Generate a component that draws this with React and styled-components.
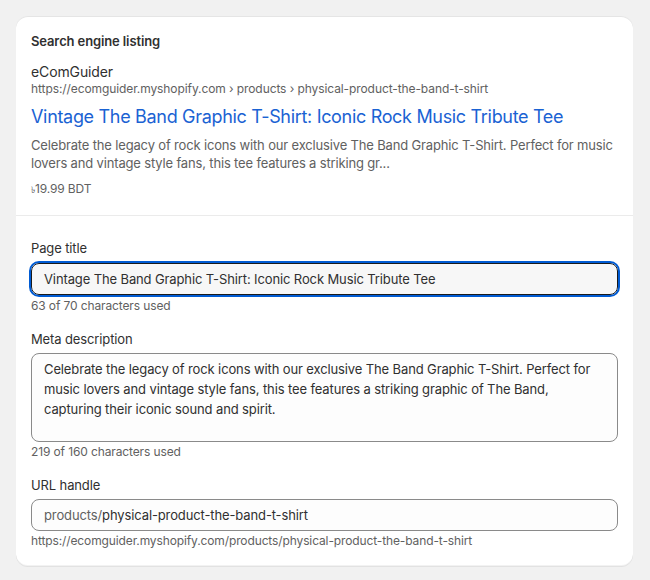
import React from 'react';
import styled, { createGlobalStyle } from 'styled-components';

const GlobalStyle = createGlobalStyle`
  body {
    margin: 0;
    background: #f1f1f1;
    font-family: Inter, "Noto Sans", sans-serif;
    color: #303030;
    letter-spacing: -0.12px;
  }
`;

const App = () => {
  return (
    <Page>
      <GlobalStyle />
      <Card>
        <Preview>
          <CardTitle>Search engine listing</CardTitle>
          <SiteName>eComGuider</SiteName>
          <Breadcrumb>https://ecomguider.myshopify.com › products › physical-product-the-band-t-shirt</Breadcrumb>
          <Headline>Vintage The Band Graphic T-Shirt: Iconic Rock Music Tribute Tee</Headline>
          <Snippet>
            Celebrate the legacy of rock icons with our exclusive The Band Graphic T-Shirt. Perfect for music
            lovers and vintage style fans, this tee features a striking gr...
          </Snippet>
          <Price><small>৳</small>19.99 BDT</Price>
        </Preview>
        <Form>
          <Field>
            <Label>Page title</Label>
            <Input $focused>Vintage The Band Graphic T-Shirt: Iconic Rock Music Tribute Tee</Input>
            <Help>63 of 70 characters used</Help>
          </Field>
          <Field>
            <Label>Meta description</Label>
            <TextArea>
              Celebrate the legacy of rock icons with our exclusive The Band Graphic T-Shirt. Perfect for
              music lovers and vintage style fans, this tee features a striking graphic of The Band,
              capturing their iconic sound and spirit.
            </TextArea>
            <Help>219 of 160 characters used</Help>
          </Field>
          <Field>
            <Label>URL handle</Label>
            <Input><Prefix>products/</Prefix>physical-product-the-band-t-shirt</Input>
            <Help>https://ecomguider.myshopify.com/products/physical-product-the-band-t-shirt</Help>
          </Field>
        </Form>
      </Card>
    </Page>
  );
};

const Page = styled.div`
  padding: 16px;
`;

const Card = styled.div`
  width: 617px;
  background: #ffffff;
  border-radius: 12px;
  box-shadow: 0 1px 0 rgba(26, 26, 26, 0.07), 0 1px 0 rgba(204, 204, 204, 0.5) inset, 0 -1px 0 rgba(0, 0, 0, 0.05) inset;
  overflow: hidden;
`;

const Preview = styled.div`
  padding: 15px 15px 17px;
  border-bottom: 1px solid #ebebeb;
`;

const CardTitle = styled.div`
  font-size: 13px;
  line-height: 20px;
  font-weight: 600;
  color: #303030;
  margin-bottom: 11px;
`;

const SiteName = styled.div`
  font-size: 14px;
  line-height: 20px;
  color: #303030;
`;

const Breadcrumb = styled.div`
  font-size: 12px;
  line-height: 16px;
  color: #616161;
  margin-top: -1px;
  letter-spacing: -0.09px;
`;

const Headline = styled.div`
  font-size: 18px;
  line-height: 24px;
  color: #1a62d3;
  margin-top: 8px;
  letter-spacing: -0.32px;
`;

const Snippet = styled.div`
  font-size: 13px;
  line-height: 18px;
  color: #616161;
  margin-top: 7px;
  letter-spacing: -0.16px;
`;

const Price = styled.div`
  font-size: 12px;
  line-height: 16px;
  color: #616161;
  margin-top: 9px;

  small {
    font-size: 9px;
  }
`;

const Form = styled.div`
  display: flex;
  flex-direction: column;
  gap: 15px;
  padding: 22px 15px 17px;
`;

const Field = styled.div`
  display: flex;
  flex-direction: column;
`;

const Label = styled.div`
  font-size: 13px;
  line-height: 20px;
  color: #303030;
  margin-bottom: 4px;
`;

const Input = styled.div`
  box-sizing: border-box;
  height: 32px;
  display: flex;
  align-items: center;
  padding: 0 12px;
  border: 1px solid ${(p) => (p.$focused ? '#1a1a1a' : '#8a8a8a')};
  border-radius: 8px;
  background: ${(p) => (p.$focused ? '#f7f7f7' : '#fdfdfd')};
  font-size: 13px;
  color: #303030;
  white-space: nowrap;
  outline: ${(p) => (p.$focused ? '2px solid #005bd3' : 'none')};
  outline-offset: 0;
  margin: ${(p) => (p.$focused ? '1px 0' : '0')};
`;

const Prefix = styled.span`
  color: #616161;
`;

const TextArea = styled.div`
  box-sizing: border-box;
  height: 89px;
  padding: 5px 12px;
  border: 1px solid #8a8a8a;
  border-radius: 8px;
  background: #fdfdfd;
  font-size: 13px;
  line-height: 20px;
  color: #303030;
`;

const Help = styled.div`
  font-size: 12px;
  line-height: 16px;
  color: #616161;
  margin-top: 2px;
`;

export default App;
